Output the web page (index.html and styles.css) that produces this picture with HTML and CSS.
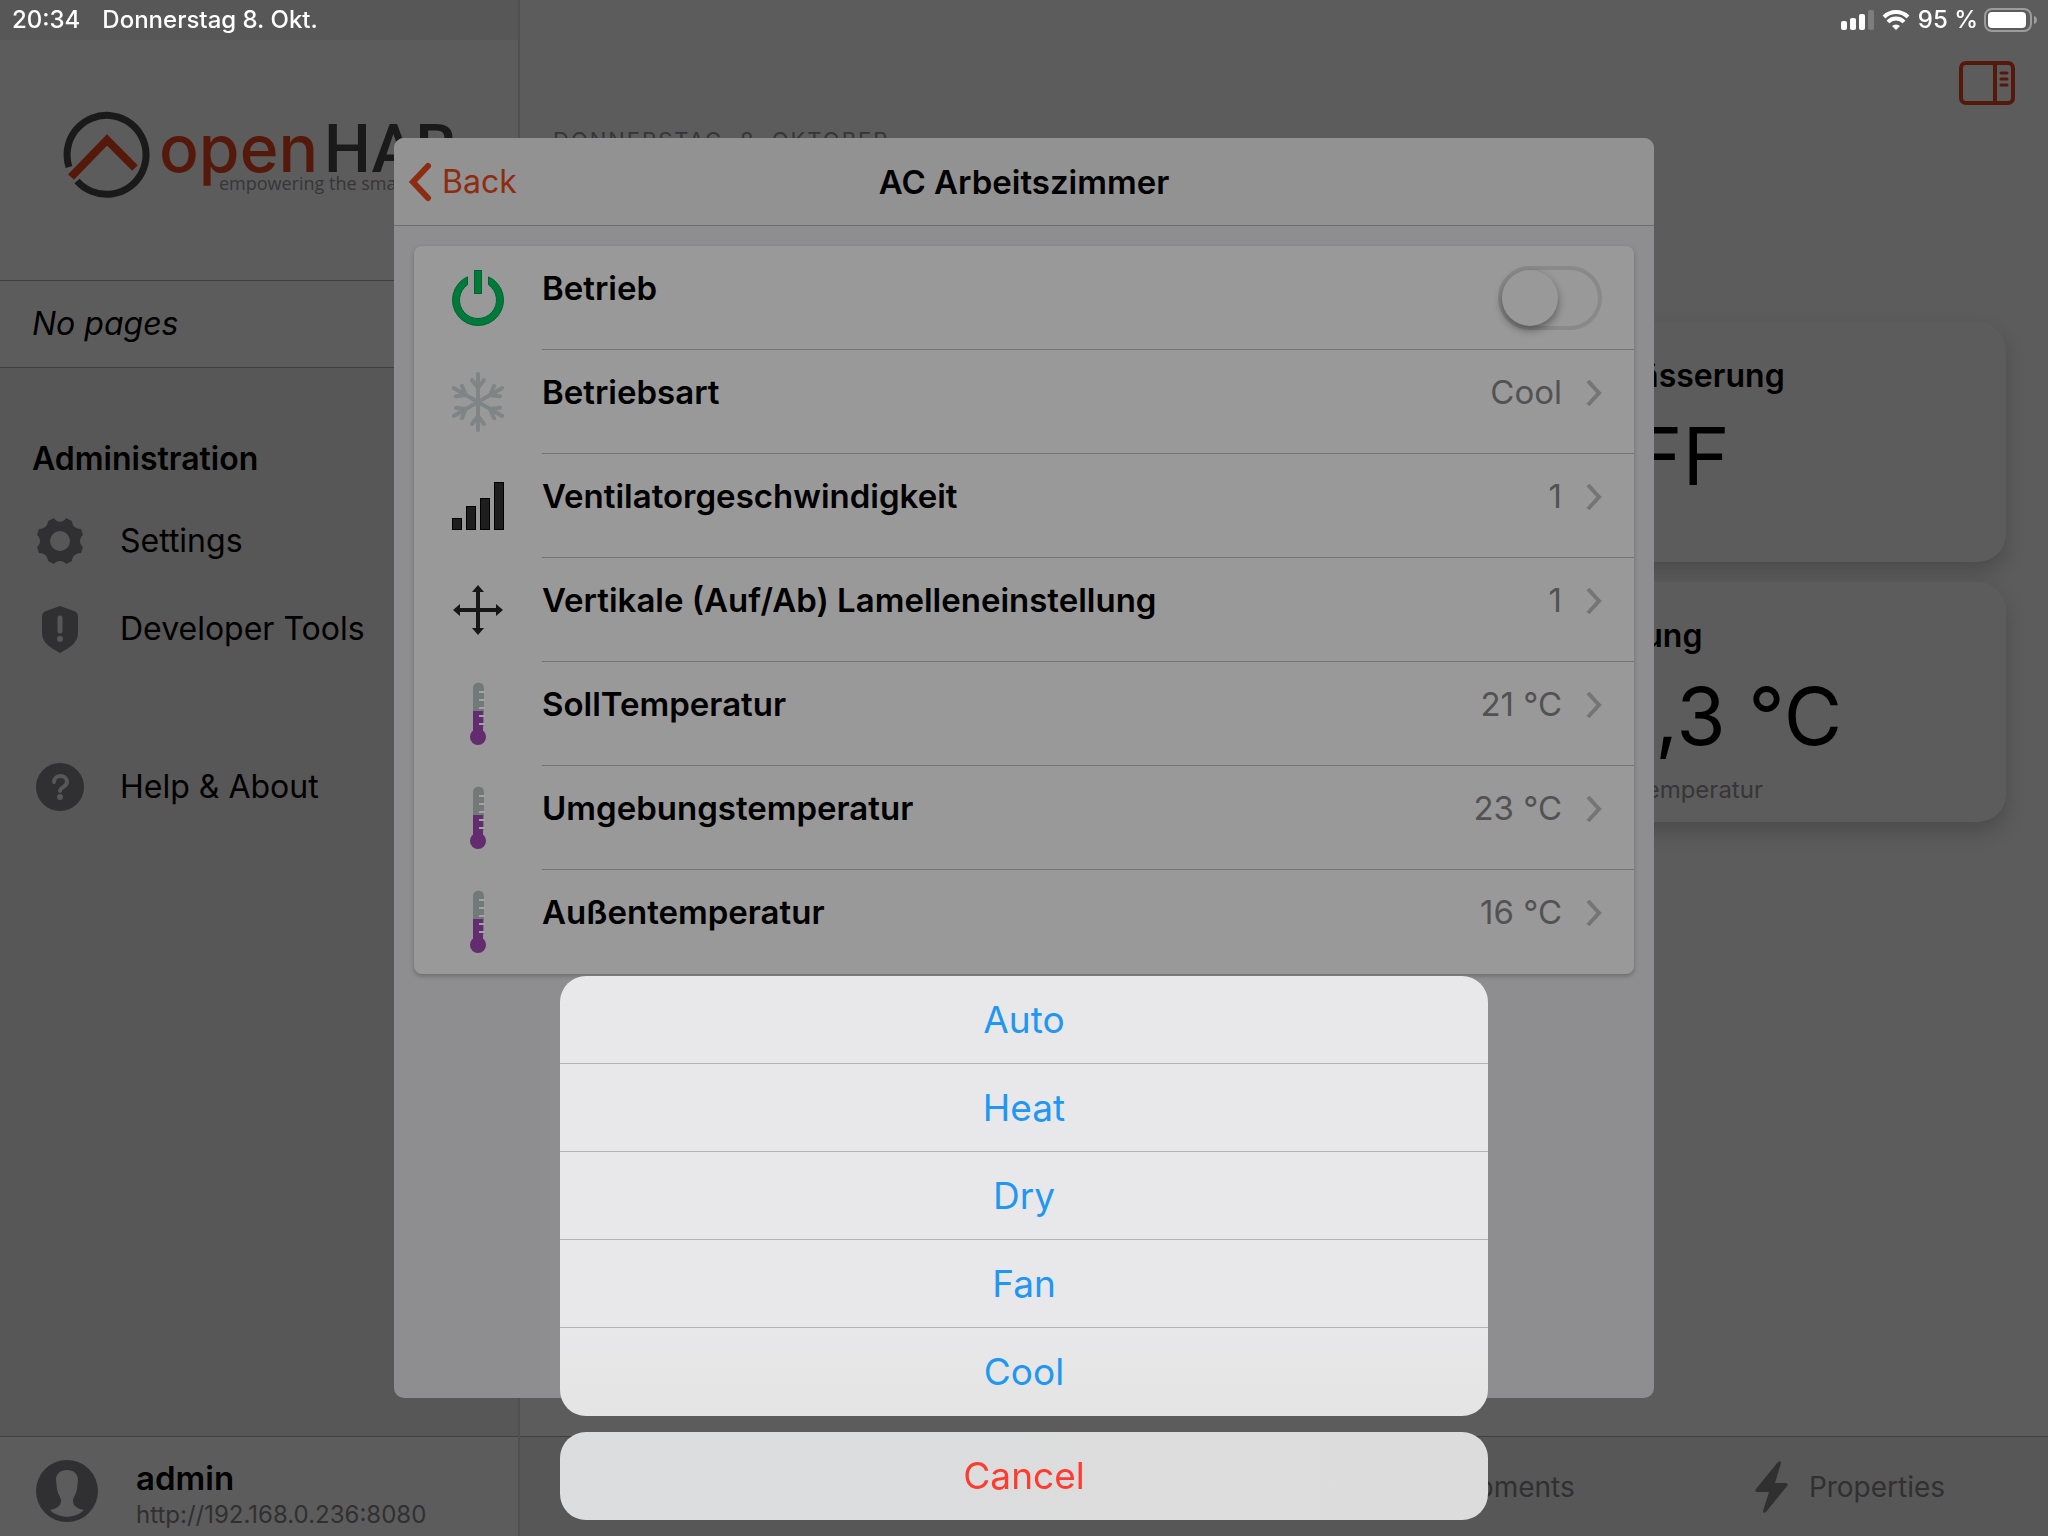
FILE: index.html
```html
<!DOCTYPE html>
<html lang="de">
<head>
  <meta charset="UTF-8">
  <meta name="viewport" content="width=device-width, initial-scale=1.0">
  <title>openHAB</title>
  <link rel="stylesheet" href="styles.css">
</head>
<body>
  <!-- Icons used more than once -->
  <svg class="sprite" aria-hidden="true">
    <symbol id="chevron" viewBox="0 0 16 28">
      <path d="M2 2l11 12L2 26" fill="none" stroke="currentColor" stroke-width="4"/>
    </symbol>
    <symbol id="thermo" viewBox="0 0 52 64">
      <path d="M21 45V6a5 5 0 0 1 11 0v39z" fill="#737878"/>
      <path d="M21 29h10v20H21z" fill="#632c6e"/>
      <circle cx="26" cy="55" r="8" fill="#632c6e"/>
      <path d="M27 10h6M27 18h6M27 26h6M27 34h6M27 42h6" stroke="#a3a3a3" stroke-width="2"/>
    </symbol>
  </svg>

  <div class="status-bar">
    <span class="clock">20:34</span>
    <span>Donnerstag 8. Okt.</span>
    <svg class="signal" viewBox="0 0 34 20" width="34" height="20">
      <rect x="0" y="11" width="6" height="9" rx="2" fill="#fff"/>
      <rect x="9" y="8" width="6" height="12" rx="2" fill="#fff"/>
      <rect x="18" y="4" width="6" height="16" rx="2" fill="#fff"/>
      <rect x="27" y="0" width="6" height="20" rx="2" fill="#7d7d7d"/>
    </svg>
    <svg class="wifi" viewBox="0 0 28 20" width="28" height="20">
      <path d="M2 7a17 17 0 0 1 24 0M6 12a11 11 0 0 1 16 0" fill="none" stroke="#fff" stroke-width="4"/>
      <path d="M14 20l-4-4a6 6 0 0 1 8 0z" fill="#fff"/>
    </svg>
    <span>95 %</span>
    <svg class="battery" viewBox="0 0 54 24" width="54" height="24">
      <rect x="1" y="1" width="46" height="22" rx="7" fill="none" stroke="#9c9c9c" stroke-width="2"/>
      <rect x="4" y="4" width="38" height="16" rx="4" fill="#fff"/>
      <path d="M50 8c4 1 4 7 0 8z" fill="#9c9c9c"/>
    </svg>
  </div>

  <div class="app">
    <aside class="sidebar">
      <div class="logo">
        <svg viewBox="0 0 400 90" width="400" height="90">
          <path d="M9 57A39.500 39.500 0 1 1 17 71" fill="none" stroke="#1a1a1a" stroke-width="7"/>
          <path d="M11 67L47 30L75 58" fill="none" stroke="#54190a" stroke-width="8"/>
          <text class="logo-open" x="99" y="62">open</text>
          <text class="logo-hab" x="264" y="62">HAB</text>
          <text class="logo-claim" x="159" y="80">empowering the smart home</text>
        </svg>
      </div>
      <p class="no-pages">No pages</p>
      <nav class="side-nav">
        <h2>Administration</h2>
        <a href="#settings">
          <svg viewBox="0 0 48 48" width="48" height="48">
            <path fill="#303032" fill-rule="evenodd" d="M18 1c3 5 9 5 12 0l6 3c0 5 4 8 9 8l2 6c-4 3-4 9 0 12l-2 6c-5 0-9 3-9 8l-6 3c-3-4-9-4-12 0l-6-3c0-5-4-8-9-8l-2-6c4-3 4-9 0-12l2-6c5 0 9-3 9-8zM24 14a10 10 0 1 0 0 20 10 10 0 1 0 0-20z"/>
          </svg>
          Settings
        </a>
        <a href="#developer">
          <svg viewBox="0 0 48 48" width="48" height="48">
            <path d="M24 1l14 5q4 2 4 5v17c0 10-9 15-18 20C15 43 6 38 6 28V11q0-3 4-5z" fill="#303032"/>
            <path d="M24 13v13" stroke="#575757" stroke-width="5" stroke-linecap="round"/>
            <circle cx="24" cy="34" r="3" fill="#575757"/>
          </svg>
          Developer Tools
        </a>
        <a class="help" href="#help">
          <svg viewBox="0 0 48 48" width="48" height="48">
            <circle cx="24" cy="24" r="24" fill="#303032"/>
            <path d="M18 19c0-8 13-8 13 0 0 5-7 5-7 9" fill="none" stroke="#575757" stroke-width="4" stroke-linecap="round"/>
            <circle cx="24" cy="34" r="3" fill="#575757"/>
          </svg>
          Help &amp; About
        </a>
      </nav>
      <a class="account" href="#profile">
        <svg viewBox="0 0 62 62" width="62" height="62">
          <circle cx="31" cy="31" r="31" fill="#303032"/>
          <path d="M31 10c-7 0-11 4-11 10l1 9c1 6 4 8 4 12 0 5-5 8-11 9 9 9 25 9 34 0-6-1-11-4-11-9 0-4 3-6 4-12l1-9c0-6-4-10-11-10z" fill="#5c5c5c"/>
        </svg>
        <span class="account-text">
          <strong>admin</strong>
          <small>http://192.168.0.236:8080</small>
        </span>
      </a>
    </aside>

    <main class="main">
      <header class="main-header">
        <p class="date">Donnerstag, 8. Oktober</p>
        <button class="panel-btn" type="button" aria-label="Seitenleiste">
          <svg viewBox="0 0 56 44" width="56" height="44" fill="none" stroke="#54190a" stroke-width="4">
            <rect x="2" y="2" width="52" height="40" rx="5"/>
            <path d="M36 2v40"/>
            <path d="M42 12h6M42 18h6M42 24h6" stroke-width="3" stroke-linecap="round"/>
          </svg>
        </button>
      </header>
      <div class="cards">
        <section class="card">
          <h3>Bewässerung</h3>
          <p class="value">OFF</p>
        </section>
        <section class="card">
          <h3>Heizung</h3>
          <p class="value">21,3 °C</p>
          <p class="note">Raumtemperatur</p>
        </section>
      </div>
      <nav class="tabbar">
        <a href="#overview">Overview</a>
        <a href="#locations">Locations</a>
        <a href="#equipment">
          <svg viewBox="0 0 34 52" width="34" height="52">
            <path d="M17 8l16 9v18l-16 9-16-9V17z" fill="#303030"/>
          </svg>
          Equipments
        </a>
        <a href="#properties">
          <svg viewBox="0 0 34 52" width="34" height="52">
            <path d="M23 1q3-2 3 1l-6 20h11q3 1 1 3L11 51q-3 2-3-1l6-19H2q-3-1-1-3z" fill="#303030"/>
          </svg>
          Properties
        </a>
      </nav>
    </main>
  </div>

  <div class="popup" role="dialog" aria-labelledby="popupTitle">
    <header class="popup-header">
      <a class="back" href="#back">
        <svg viewBox="0 0 24 40" width="24" height="40">
          <path d="M20 4L5 20l15 16" fill="none" stroke="#8d2c10" stroke-width="6" stroke-linecap="round"/>
        </svg>
        Back
      </a>
      <h1 id="popupTitle">AC Arbeitszimmer</h1>
    </header>
    <ul class="list">
      <li>
        <svg class="item-icon" viewBox="0 0 52 64">
          <path d="M15.500 10.800A25.500 25.500 0 1 0 36.500 10.800V18.800A18.500 18.500 0 1 1 15.500 18.800z" fill="#007a3b" stroke="#006430"/>
          <rect x="22.500" y="4.500" width="7" height="23" fill="#007a3b" stroke="#006430"/>
        </svg>
        <div class="item-row">
          <label for="betrieb">Betrieb</label>
          <input class="toggle" type="checkbox" id="betrieb">
        </div>
      </li>
      <li>
        <svg class="item-icon" viewBox="0 0 52 64" fill="none" stroke="#7f8587" stroke-width="4" stroke-linecap="round">
          <path id="arm" d="M26 32V4M20 10l6 8 6-8"/>
          <use href="#arm" transform="rotate(60 26 32)"/>
          <use href="#arm" transform="rotate(120 26 32)"/>
          <use href="#arm" transform="rotate(180 26 32)"/>
          <use href="#arm" transform="rotate(240 26 32)"/>
          <use href="#arm" transform="rotate(300 26 32)"/>
        </svg>
        <div class="item-row">
          <span>Betriebsart</span>
          <span class="after">Cool</span>
          <svg class="chevron"><use href="#chevron"/></svg>
        </div>
      </li>
      <li>
        <svg class="item-icon" viewBox="0 0 52 64" fill="#1e1e1e" stroke="#000">
          <rect x="0.500" y="44.500" width="9" height="11"/>
          <rect x="14.500" y="32.500" width="9" height="23"/>
          <rect x="28.500" y="24.500" width="9" height="31"/>
          <rect x="42.500" y="8.500" width="9" height="47"/>
        </svg>
        <div class="item-row">
          <span>Ventilatorgeschwindigkeit</span>
          <span class="after">1</span>
          <svg class="chevron"><use href="#chevron"/></svg>
        </div>
      </li>
      <li>
        <svg class="item-icon" viewBox="0 0 52 64">
          <path d="M26 12v40M6 32h40" stroke="#161616" stroke-width="4"/>
          <path d="M26 7l6 7H20zM26 57l6-7H20zM1 32l7-6v12zM51 32l-7-6v12z" fill="#161616"/>
        </svg>
        <div class="item-row">
          <span>Vertikale (Auf/Ab) Lamelleneinstellung</span>
          <span class="after">1</span>
          <svg class="chevron"><use href="#chevron"/></svg>
        </div>
      </li>
      <li>
        <svg class="item-icon"><use href="#thermo"/></svg>
        <div class="item-row">
          <span>SollTemperatur</span>
          <span class="after">21 °C</span>
          <svg class="chevron"><use href="#chevron"/></svg>
        </div>
      </li>
      <li>
        <svg class="item-icon"><use href="#thermo"/></svg>
        <div class="item-row">
          <span>Umgebungstemperatur</span>
          <span class="after">23 °C</span>
          <svg class="chevron"><use href="#chevron"/></svg>
        </div>
      </li>
      <li>
        <svg class="item-icon"><use href="#thermo"/></svg>
        <div class="item-row">
          <span>Außentemperatur</span>
          <span class="after">16 °C</span>
          <svg class="chevron"><use href="#chevron"/></svg>
        </div>
      </li>
    </ul>
  </div>

  <div class="actions">
    <div class="actions-group">
      <button type="button">Auto</button>
      <button type="button">Heat</button>
      <button type="button">Dry</button>
      <button type="button">Fan</button>
      <button type="button">Cool</button>
    </div>
    <div class="actions-group cancel">
      <button type="button">Cancel</button>
    </div>
  </div>
</body>
</html>
```
FILE: styles.css
```css
:root {
  --bg: #5c5c5c;
  --bar-bg: #575757;
  --line: #404040;
  --sheet-line: #b5b5b7;
  --item-line: #757575;
}

* {
  box-sizing: border-box;
}

body {
  margin: 0;
  background: var(--bg);
  color: #000;
  font-family: Inter, "Liberation Sans", sans-serif;
  font-size: 32px;
  line-height: 40px;
  overflow: hidden;
}

h1, h2, h3, p, ul {
  margin: 0;
  padding: 0;
}

a {
  color: inherit;
  text-decoration: none;
}

button {
  border: 0;
  background: none;
  font: inherit;
  cursor: pointer;
}

.sprite {
  position: absolute;
  width: 0;
  height: 0;
}

/* Status bar */
.status-bar {
  position: fixed;
  top: 0;
  left: 0;
  right: 0;
  z-index: 1;
  display: flex;
  align-items: center;
  height: 40px;
  padding: 0 10px 0 12px;
  color: #fff;
  font-size: 24px;
  font-weight: 500;
}

.clock {
  margin-right: 22px;
}

.signal {
  margin-left: auto;
}

.wifi {
  margin: 0 8px 0 7px;
}

.battery {
  margin-left: 6px;
}

/* Page layout */
.app {
  display: grid;
  grid-template-columns: 520px 1fr;
  height: 100vh;
}

.sidebar {
  display: flex;
  flex-direction: column;
  padding-top: 40px;
  border-right: 2px solid #505050;
  background: var(--bar-bg);
}

.logo {
  height: 240px;
  padding: 70px 0 0 60px;
  background: var(--bg);
}

.logo svg {
  overflow: visible;
}

.logo-open {
  font: 500 66px Inter, sans-serif;
  fill: #54190a;
}

.logo-hab {
  font: 500 66px Roboto, sans-serif;
  fill: #1a1a1a;
}

.logo-claim {
  font: 18px "Open Sans", sans-serif;
  fill: #363636;
}

.no-pages {
  padding: 23px 32px;
  border-top: 1px solid var(--line);
  border-bottom: 1px solid var(--line);
  background: var(--bg);
  font-style: italic;
}

.side-nav {
  display: flex;
  flex-direction: column;
  flex: 1;
  padding-top: 71px;
}

.side-nav h2 {
  padding: 0 32px;
  margin-bottom: 18px;
  font-size: 32px;
  font-weight: 600;
}

.side-nav a {
  display: flex;
  align-items: center;
  gap: 36px;
  height: 88px;
  padding: 0 36px;
}

.side-nav .help {
  margin-top: 70px;
}

.account {
  display: flex;
  align-items: center;
  gap: 38px;
  height: 100px;
  padding: 8px 36px 0;
  border-top: 1px solid var(--line);
  background: var(--bg);
}

.account-text {
  display: flex;
  flex-direction: column;
  padding-top: 8px;
}

.account strong {
  font-size: 33px;
  font-weight: 600;
}

.account small {
  color: #303030;
  font-size: 24px;
  line-height: 34px;
}

.main {
  display: flex;
  flex-direction: column;
}

.main-header {
  display: flex;
  justify-content: space-between;
  height: 320px;
  padding: 61px 33px 0;
}

.date {
  padding-top: 63px;
  color: #363636;
  font-size: 22px;
  line-height: 32px;
  letter-spacing: 2px;
  text-transform: uppercase;
}

.panel-btn {
  align-self: flex-start;
  padding: 0;
  line-height: 0;
}

.cards {
  display: grid;
  align-content: start;
  gap: 20px;
  flex: 1;
  padding: 2px 42px 0;
  justify-items: end;
}

.card {
  width: 460px;
  height: 240px;
  padding: 34px 28px 0;
  border-radius: 28px;
  background: var(--bg);
  box-shadow: 0 10px 20px rgba(0, 0, 0, 0.18);
}

.card h3 {
  font-size: 32px;
  font-weight: 600;
}

.value {
  margin-top: 16px;
  font-size: 80px;
  line-height: 88px;
}

.note {
  margin-top: 14px;
  color: #363636;
  font-size: 24px;
  line-height: 32px;
}

.tabbar {
  display: grid;
  grid-template-columns: repeat(4, 1fr);
  height: 100px;
  padding-right: 8px;
  border-top: 1px solid var(--line);
  background: var(--bar-bg);
  color: #303030;
  font-size: 28px;
}

.tabbar a {
  display: flex;
  align-items: center;
  justify-content: center;
  gap: 20px;
}

/* Popup */
.popup {
  position: fixed;
  top: 50%;
  left: 50%;
  width: 1260px;
  height: 1260px;
  transform: translate(-50%, -50%);
  border-radius: 10px;
  background: #8e8e91;
  overflow: hidden;
}

.popup-header {
  display: grid;
  grid-template-columns: 1fr auto 1fr;
  align-items: center;
  height: 88px;
  padding: 0 14px;
  border-bottom: 1px solid #6f6f70;
  background: #929293;
}

.popup-header h1 {
  font-size: 33px;
  font-weight: 600;
}

.back {
  display: flex;
  align-items: center;
  gap: 10px;
  color: #8d2c10;
}

.list {
  margin: 20px;
  border-radius: 8px;
  background: #999;
  box-shadow: 0 2px 4px rgba(0, 0, 0, 0.25);
  font-size: 33px;
  list-style: none;
}

.list li {
  display: flex;
  height: 104px;
  padding-left: 38px;
}

.item-icon {
  flex: none;
  width: 52px;
  height: 64px;
  margin: 20px 38px 0 0;
}

.item-row {
  display: flex;
  flex: 1;
  align-items: flex-start;
  padding: 22px 32px 0 0;
  border-bottom: 1px solid var(--item-line);
  font-weight: 600;
}

.list li:last-child .item-row {
  border-bottom: 0;
}

.after {
  margin-left: auto;
  color: #525252;
  font-weight: 400;
}

.chevron {
  width: 16px;
  height: 28px;
  margin: 7px 0 0 24px;
  color: #757575;
}

.toggle {
  appearance: none;
  width: 104px;
  height: 64px;
  margin: -2px 0 0 auto;
  border: 4px solid #898989;
  border-radius: 32px;
  background: #999;
}

.toggle::before {
  content: "";
  display: block;
  width: 56px;
  height: 56px;
  border-radius: 50%;
  background: #999;
  box-shadow: 0 4px 8px rgba(0, 0, 0, 0.4);
}

.toggle:checked::before {
  margin-left: 40px;
}

/* Action sheet */
.actions {
  position: fixed;
  bottom: 16px;
  left: 50%;
  width: 928px;
  transform: translateX(-50%);
}

.actions-group {
  border-radius: 26px;
  background: linear-gradient(#e8e8ea 80%, #e4e4e4);
  overflow: hidden;
}

.actions-group button {
  display: block;
  width: 100%;
  height: 88px;
  border-bottom: 1px solid var(--sheet-line);
  color: #2196f3;
  font-size: 37px;
}

.actions-group button:last-child {
  border-bottom: 0;
}

.actions-group.cancel {
  margin-top: 16px;
  background: linear-gradient(90deg, #dcdddf, #dcdcdc);
}

.cancel button {
  color: #ff3b30;
}
```
